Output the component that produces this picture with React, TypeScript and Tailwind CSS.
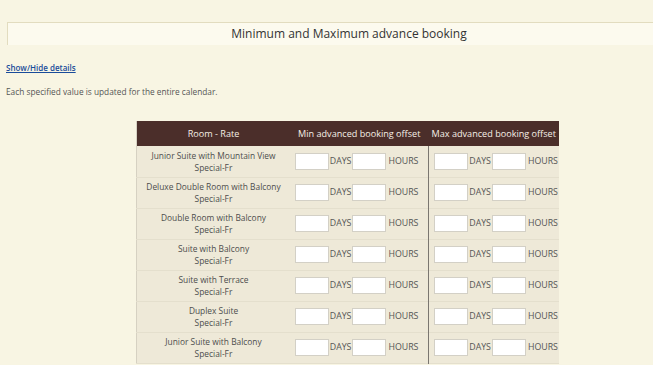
import React from 'react';

const rooms = [
  'Junior Suite with Mountain View',
  'Deluxe Double Room with Balcony',
  'Double Room with Balcony',
  'Suite with Balcony',
  'Suite with Terrace',
  'Duplex Suite',
  'Junior Suite with Balcony',
];

const OffsetInputs = () => (
  <div className="flex items-center pl-[5px] text-[8.8px] text-[#555]">
    <input type="text" className="w-[34px] h-[17px] bg-white border border-[#d3d0c6] outline-none" />
    <span className="ml-[1px] mr-[1px]">DAYS</span>
    <input type="text" className="w-[34px] h-[17px] bg-white border border-[#d3d0c6] outline-none" />
    <span className="ml-[2px]">HOURS</span>
  </div>
);

export default function App() {
  return (
    <div
      className="w-[653px] h-[365px] overflow-hidden bg-[#f8f5e3] text-[#444]"
      style={{ fontFamily: '"Open Sans", "Noto Sans", sans-serif' }}
    >
      <div className="w-[683px] ml-[7px] pt-[22px]">
        <div className="h-[23px] bg-[#fcfaee] border-t border-l border-[#e2dcbf] flex items-center justify-center text-[12px] text-[#333]">
          Minimum and Maximum advance booking
        </div>

        <a href="#" className="block -ml-[1px] mt-[18px] text-[8px] font-semibold text-[#1a4c9a] underline leading-[10px]">
          Show/Hide details
        </a>
        <p className="-ml-[1px] mt-[14px] text-[8.3px] text-[#555] leading-[10px]">
          Each specified value is updated for the entire calendar.
        </p>

        <div className="flex justify-center mt-[24px] -ml-[2px]">
          <table className="border-collapse border-l border-[#d6d1c2]">
            <thead>
              <tr className="h-[25px] bg-[#4b2e2a] text-[#f5efe6] text-[9.1px]">
                <th className="w-[153px] font-normal">Room - Rate</th>
                <th className="w-[139px] font-normal">Min advanced booking offset</th>
                <th className="w-[130px] font-normal">Max advanced booking offset</th>
              </tr>
            </thead>
            <tbody>
              {rooms.map((room) => (
                <tr key={room} className="h-[31px] bg-[#eee9d8] border-b border-[#e4dfcd]">
                  <td className="text-center text-[8.4px] leading-[12px] text-[#4d4d4d] pt-[1px]">
                    <div>{room}</div>
                    <div>Special-Fr</div>
                  </td>
                  <td>
                    <OffsetInputs />
                  </td>
                  <td className="border-l border-[#7a7670]">
                    <OffsetInputs />
                  </td>
                </tr>
              ))}
            </tbody>
          </table>
        </div>
      </div>
    </div>
  );
}
